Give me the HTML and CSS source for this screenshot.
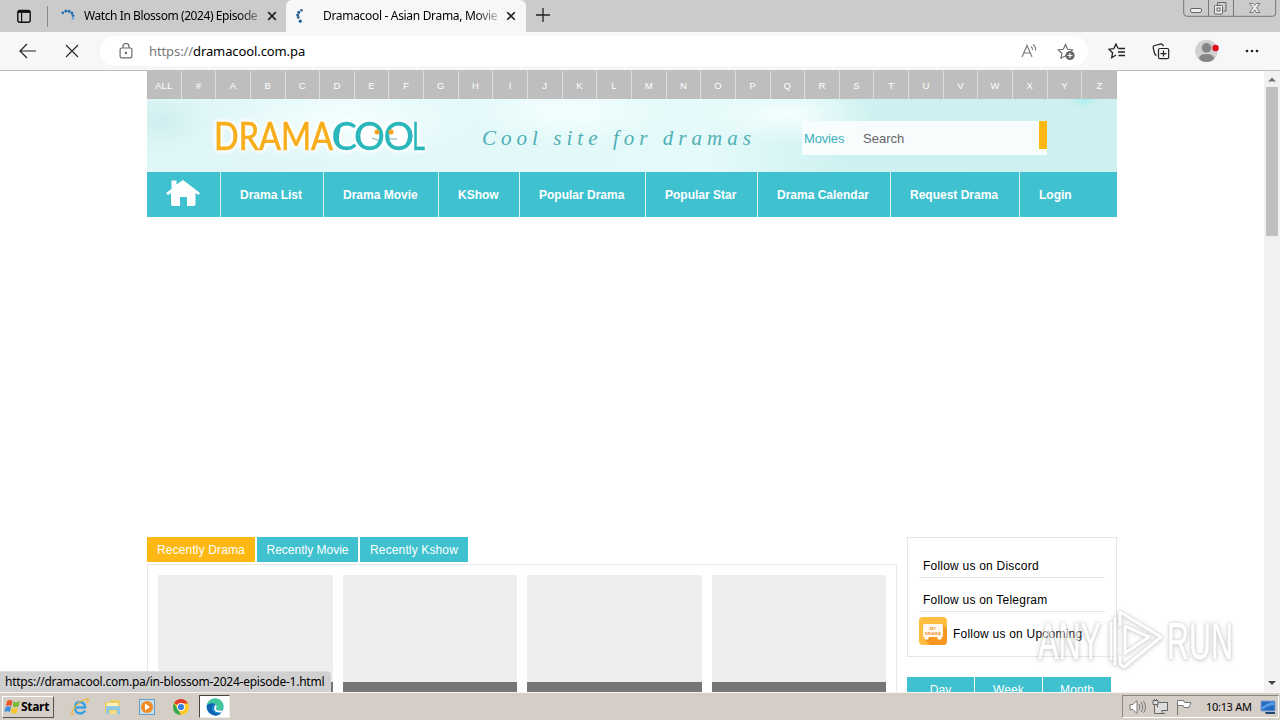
FILE: index.html
```
<!DOCTYPE html>
<html lang="en">
<head>
<meta charset="utf-8">
<title>Dramacool - Asian Drama, Movies</title>
<link rel="stylesheet" href="styles.css">
</head>
<body>
<div class="screen">
  <header class="tabstrip">
    <svg class="tab-actions" width="16" height="16" viewBox="0 0 16 16"><rect x="1.800" y="2.400" width="12.400" height="11.800" rx="2" fill="none" stroke="#111" stroke-width="1.400"/><path d="M2 3.700h12" stroke="#111" stroke-width="2.400"/><path d="M5.600 5v9" stroke="#111" stroke-width="1.200"/></svg>
    <span class="strip-divider"></span>
    <div class="tab tab-first">
      <svg width="16" height="16" viewBox="0 0 16 16"><g fill="#1f6caf"><circle cx="2.800" cy="4.800" r="1.400"/><circle cx="5.800" cy="3" r="1.500"/><circle cx="9" cy="3.200" r="1.500"/><circle cx="11.800" cy="5" r="1.500"/><circle cx="13" cy="7.600" r="1.300"/></g><circle cx="13" cy="10.400" r="1.400" fill="#64a9e0"/></svg>
      <span class="tab-title title-one">Watch In Blossom (2024) Episode</span>
      <svg class="tab-close" width="10" height="10" viewBox="0 0 10 10"><path d="M1.200 1.200l7.600 7.600M8.800 1.200L1.200 8.800" stroke="#222" stroke-width="1.700"/></svg>
    </div>
    <div class="tab tab-active">
      <svg width="16" height="16" viewBox="0 0 16 16"><g fill="#245f90"><circle cx="7.500" cy="2.300" r="1.300"/><circle cx="4.800" cy="4.200" r="1.500"/><circle cx="3.700" cy="7" r="1.500"/><circle cx="4.200" cy="9.400" r="1.300"/><circle cx="6.300" cy="13.200" r="1.600"/></g></svg>
      <span class="tab-title title-two">Dramacool - Asian Drama, Movie</span>
      <svg class="tab-close" width="10" height="10" viewBox="0 0 10 10"><path d="M1.200 1.200l7.600 7.600M8.800 1.200L1.200 8.800" stroke="#222" stroke-width="1.600"/></svg>
    </div>
    <svg class="new-tab" width="14" height="14" viewBox="0 0 14 14"><path d="M7 0v14M0 7h14" stroke="#222" stroke-width="1.300"/></svg>
    <div class="window-controls">
      <svg width="94" height="18" viewBox="0 0 94 18" fill="none"><path d="M.7 0v13q0 3.300 3 3.300h86q3 0 3-3.300V0M25.500 0v16M50.500 0v16" stroke="#777"/><rect x="7.500" y="8.500" width="11" height="4" rx="1.500" fill="#eee" stroke="#666"/><path d="M34.500 5V2.500h8.500v8.500h-2.500" stroke="#666"/><rect x="31.500" y="5.500" width="8" height="8.500" rx="1" fill="#eee" stroke="#666"/><rect x="34" y="8" width="3" height="3" stroke="#666"/><path d="M66.500 3.500h3.500l1.700 2 1.700-2H77l-3.500 4.200 3.500 4.800h-3.600l-1.700-2.600-1.700 2.600h-3.500l3.500-4.800z" fill="#eee" stroke="#777"/></svg>
    </div>
  </header>
  <div class="toolbar">
    <svg class="nav-back" width="18" height="16" viewBox="0 0 18 16" fill="none" stroke="#222" stroke-width="1.200"><path d="M17 8H1.500M8 1L1 8l7 7"/></svg>
    <svg class="nav-stop" width="14" height="14" viewBox="0 0 14 14"><path d="M1 1l12 12M13 1L1 13" stroke="#222" stroke-width="1.100"/></svg>
    <div class="address">
      <svg class="lock" width="14" height="16" viewBox="0 0 14 16" fill="none" stroke="#6b6b6b" stroke-width="1.200"><rect x="1.100" y="5" width="11.800" height="9.900" rx="1.600"/><path d="M4 5V3.500a3 3 0 0 1 6 0V5"/><circle cx="7" cy="10" r=".6" fill="#666"/></svg>
      <span class="url"><span class="url-scheme">https://</span>dramacool.com.pa</span>
      <svg class="read-aloud" width="18" height="16" viewBox="0 0 18 16" fill="none" stroke="#777" stroke-width="1.100"><path d="M1 14L6 2.500 11 14M2.800 10h6.500M10 3.500q1.700 1.400 1.500 3.500M12 1.500q3 2 2.600 6"/></svg>
      <svg class="star-add" width="18" height="18" viewBox="0 0 18 18"><path d="M8.500 1.500l2.100 4.700 5 .6-3.600 3.500.8 5-4.300-2.500L4 15.300l.9-5-3.700-3.500 5.100-.6z" fill="none" stroke="#666" stroke-width="1.100"/><circle cx="13" cy="12.500" r="4.600" fill="#666"/><path d="M10.500 12.500h5M13 10v5" stroke="#fff" stroke-width="1.200"/></svg>
    </div>
    <svg class="favorites" width="18" height="16" viewBox="0 0 18 16" fill="none" stroke="#222" stroke-width="1.300"><path d="M10 5.500L8 1 5.800 5.600 1 6.200l3.600 3.500-.9 5L8 12M10.500 5.500H17M10 9h7M10.500 12.500H17"/></svg>
    <svg class="collections" width="18" height="17" viewBox="0 0 18 17" fill="none" stroke="#222" stroke-width="1.200"><path d="M4.500 12.500Q3 12 2.500 10L1.200 5q-.4-2 1.500-2.500l6.500-1.700q1.500 0 2.300 2.500"/><rect x="6.500" y="5.500" width="10.200" height="10.200" rx="1.500"/><path d="M8.500 10.600H14.500M11.500 7.600v6"/></svg>
    <svg class="avatar" width="24" height="24" viewBox="0 0 24 24"><circle cx="11.500" cy="12" r="11.300" fill="#d0d0d0"/><circle cx="11.500" cy="8.800" r="4.800" fill="#858585"/><path d="M4 20q0-5 7.500-5t7.500 5q-3 3-7.500 3T4 20" fill="#858585"/><circle cx="20.500" cy="9" r="3.200" fill="#e00b1c"/></svg>
    <svg class="more" width="14" height="4" viewBox="0 0 14 4" fill="#222"><circle cx="2" cy="2" r="1.300"/><circle cx="7" cy="2" r="1.300"/><circle cx="12" cy="2" r="1.300"/></svg>
  </div>

  <main class="viewport">
    <div class="site">
      <nav class="letters"><a>ALL</a><a>#</a><a>A</a><a>B</a><a>C</a><a>D</a><a>E</a><a>F</a><a>G</a><a>H</a><a>I</a><a>J</a><a>K</a><a>L</a><a>M</a><a>N</a><a>O</a><a>P</a><a>Q</a><a>R</a><a>S</a><a>T</a><a>U</a><a>V</a><a>W</a><a>X</a><a>Y</a><a>Z</a></nav>
      <div class="banner">
        <svg class="logo" width="230" height="56" viewBox="0 0 230 56">
          <g fill="#fff"><circle cx="164" cy="27" r="12"/><circle cx="194" cy="27" r="12"/></g>
          <text class="logo-drama" x="9" y="41" textLength="119" lengthAdjust="spacingAndGlyphs">DRAMA</text>
          <g class="logo-cool">
            <text x="126.500 149.500 178.500" y="41">COO</text>
            <text x="207" y="41" textLength="13" lengthAdjust="spacingAndGlyphs">L</text>
          </g>
          <path d="M164 13.500a13.500 13.500 0 0 0 0 27Q155 36 155 27t9-13.500M194 13.500a13.500 13.500 0 0 1 0 27Q203 36 203 27t-9-13.500M137 14q-9 5-8 14t9 12q-5-6-4-13t3-13" fill="#29b7bb"/>
          <circle cx="172" cy="23" r="2.500" fill="#f5a21f"/><circle cx="186" cy="23" r="2.500" fill="#f5a21f"/>
          <path d="M167 29l7 2.500M184 30h8" stroke="#4e99a4" stroke-width=".8"/>
        </svg>
        <svg class="tagline" width="280" height="40" viewBox="0 0 280 40"><text x="1" y="27" textLength="269">Cool site for dramas</text></svg>
        <div class="search"><span class="search-type">Movies</span><span class="search-input">Search</span><span class="search-button"></span></div>
      </div>
      <nav class="mainnav">
        <a class="n-home"><svg width="36" height="30" viewBox="0 0 36 30"><path d="M7.500 11V2.500h5v4L19 2l17 13-1.500 2-3-2v11q0 2-2 2H23v-9h-7v9H9q-2 0-2-2V15l-3 2-2-2z" fill="#fff"/></svg></a>
        <a class="n-list">Drama List</a><a class="n-movie">Drama Movie</a><a class="n-kshow">KShow</a><a class="n-popular">Popular Drama</a><a class="n-star">Popular Star</a><a class="n-calendar">Drama Calendar</a><a class="n-request">Request Drama</a><a class="n-login">Login</a>
      </nav>
      <div class="content">
        <section class="recent">
          <div class="recent-tabs"><a class="recent-on">Recently Drama</a><a class="recent-movie">Recently Movie</a><a>Recently Kshow</a></div>
          <div class="cards"><div class="card"></div><div class="card"></div><div class="card"></div><div class="card"></div></div>
        </section>
        <aside class="side">
          <div class="follow">
            <a>Follow us on Discord</a><a>Follow us on Telegram</a>
            <a class="upcoming"><svg width="28" height="28" viewBox="0 0 28 28"><rect width="28" height="28" rx="4" fill="#ffbd42"/><path d="M5 22L22 6l6 6v12q0 4-4 4H11z" fill="#f69822"/><rect x="4" y="7" width="20" height="13" rx="1.500" fill="#fff8ee"/><path d="M6 20v2h3v-2M19 20v2h3v-2" stroke="#fff" fill="#fff"/><text x="14" y="12.500" text-anchor="middle" class="mini">MY</text><text x="14" y="17.500" text-anchor="middle" class="mini">DRAMA</text></svg><span>Follow us on Upcoming</span></a>
          </div>
          <div class="periods"><a>Day</a><a>Week</a><a>Month</a></div>
        </aside>
      </div>
    </div>
    <div class="scrollbar">
      <svg width="16" height="16" viewBox="0 0 16 16"><path d="M4 10.500l4-4 4 4z" fill="#777"/></svg>
      <span class="thumb"></span>
      <svg class="arrow-down" width="16" height="16" viewBox="0 0 16 16"><path d="M4 6l4 4 4-4z" fill="#444"/></svg>
    </div>
    <div class="status-bubble">https://dramacool.com.pa/in-blossom-2024-episode-1.html</div>
    <svg class="watermark" width="204" height="72" viewBox="0 0 204 72">
      <text class="mark" x="2" y="53" textLength="63" lengthAdjust="spacingAndGlyphs">ANY</text>
      <text class="mark" x="131" y="53" textLength="66" lengthAdjust="spacingAndGlyphs">RUN</text>
      <path d="M75 54V16M79 11v48M84 20V6l41 25-37 30-4-3V50M89 20v27l24-16z" fill="none" stroke="#fff" stroke-width="3" stroke-linejoin="round"/>
    </svg>
  </main>

  <footer class="taskbar">
    <div class="start"><svg width="17" height="16" viewBox="0 0 17 16"><path d="M3 2q3-2 5.500 0L7.300 7Q5 5.500 2 7z" fill="#e9572b"/><path d="M9.500 2.500Q12 4 16 2l-1.500 5.500q-3 1.500-6-.2z" fill="#7dbb37"/><path d="M1.600 8Q5 6.600 7 8l-1.200 5Q4 11.500.5 13z" fill="#3f8ed8"/><path d="M8 8.500q3 1.700 6 .2L12.700 14q-3 1.300-6-.5z" fill="#f8c630"/></svg><b>Start</b></div>
    <svg class="task-ie" width="18" height="18" viewBox="0 0 18 18" fill="none"><path d="M14 12.500Q12.500 15.500 9 15.500q-5-.5-5-6T9 4q5 .5 5 5.500H5" stroke="#37a0e3" stroke-width="2.300"/><path d="M3 16Q-1 18 2 12 7 3 15 1q4-.5 1 4" stroke="#edb92f" stroke-width="1.200"/></svg>
    <svg class="task-folder" width="18" height="18" viewBox="0 0 18 18"><path d="M1 4h5l1-2h8l1 3v10H1z" fill="#efcc65"/><path d="M3 5h11v3H3z" fill="#fff2b5"/><path d="M2 8h14v8h-3v-4H5v4H2z" fill="#90c9e4"/><path d="M6 13h6v3H6z" fill="#f8df87"/></svg>
    <svg class="task-media" width="18" height="18" viewBox="0 0 18 18"><rect x="1.500" y="1.500" width="15" height="15" fill="#c4dfef" stroke="#679fc4"/><circle cx="9" cy="9" r="6" fill="#f18b22"/><path d="M7 5.500l5 3.500-5 3.500z" fill="#fff"/></svg>
    <svg class="task-chrome" width="18" height="18" viewBox="0 0 18 18"><circle cx="9" cy="9" r="8" fill="#ffca28"/><path d="M9 9L2 5Q4.500 1 9 1t7 4.500H9z" fill="#e43d30"/><path d="M2 5l4.500 7.500L9 17Q1 16.500 1 9q0-2 1-4" fill="#33a852"/><circle cx="9" cy="9" r="4" fill="#fff"/><circle cx="9" cy="9" r="3.100" fill="#397de8"/></svg>
    <div class="task-active"><svg width="18" height="18" viewBox="0 0 18 18"><circle cx="9" cy="9" r="8.500" fill="#1685cf"/><path d="M1 7Q3 0 10 .5q7 1 7.500 7.500 0 4-4.500 4.500-3 0-3-2 1-1 .5-3Q7 3 1 7" fill="#42c99a"/><path d="M7 7q-3 4 1 7.500 3.500 2.500 7.500.3Q12 19 7 17 1 14 1 8q3-4 8-1.500" fill="#1161ae"/><path d="M9.500 6.500q2 1.500.5 4 0 2 3 2h4l-1.500 2Q8 15 8 10z" fill="#fff"/></svg></div>
    <div class="tray">
      <svg width="19" height="18" viewBox="0 0 19 18" fill="#fff" stroke="#777"><path d="M2 6.500h3l4-4v13l-4-4H2z"/><path d="M11 6q2 3 0 6M13 4q3.500 5 0 10M15.500 3q4 6 0 12" fill="none"/></svg>
      <svg width="20" height="18" viewBox="0 0 20 18" fill="#ddd" stroke="#666"><rect x="6.500" y="4.500" width="10" height="8"/><path d="M3.500 7v8.500H14M11 13v2.500M2 2.500h5v4H2zM3.500 1v2M5.500 1v2"/></svg>
      <svg width="20" height="18" viewBox="0 0 20 18" fill="#fff" stroke="#777"><path d="M2.500 17V2.500h6l1 2H16l-2 5H9l-1-2H3"/></svg>
      <span class="clock">10:13 AM</span>
      <svg width="16" height="16" viewBox="0 0 16 16"><path d="M1 2h14v10H1z" fill="#2468c4" stroke="#7ca4cf"/><path d="M2 8q6-5 12-5v3q-6 0-12 5" fill="#589ce4"/><path d="M5 13h10v2H6z" fill="#20466f"/></svg>
    </div>
  </footer>
</div>
</body>
</html>
```
FILE: styles.css
```
* { box-sizing: border-box; }
body { margin: 0; font-family: "Liberation Sans", Arial, sans-serif; font-size: 12px; color: #000; }
svg { display: block; flex: none; }
.screen { width: 1280px; height: 720px; display: grid; grid-template-rows: 32px 38px 622px 28px; overflow: hidden; background: #fff; }
.tabstrip { display: flex; background: #cbcbcb; font: 12px "Noto Sans", sans-serif; }
.tab-actions { margin: 8px 0 0 16px; }
.strip-divider { width: 1px; height: 21px; margin: 6px 0 0 15px; background: #888; }
.tab { display: flex; padding-top: 8px; height: 32px; }
.tab-first { width: 238px; padding-left: 12px; }
.tab-active { width: 240px; padding-left: 8px; background: #f7f7f7; border-radius: 6px 6px 0 0; }
.tab-title { height: 16px; line-height: 16px; white-space: nowrap; }
.title-one { margin-left: 8px; width: 175px; letter-spacing: -.42px; -webkit-mask-image: linear-gradient(90deg,#000 155px,transparent 185px); }
.title-two { margin-left: 13px; width: 175px; letter-spacing: -.32px; -webkit-mask-image: linear-gradient(90deg,#000 152px,transparent 182px); }
.tab-close { margin: 3px 0 0 8px; }
.new-tab { margin: 8px 0 0 10px; }
.window-controls { margin-left: auto; margin-right: 3px; }
.toolbar { display: flex; align-items: center; background: #f7f7f7; }
.nav-back { margin-left: 19px; }
.nav-stop { margin-left: 28px; }
.address { display: flex; align-items: center; width: 988px; height: 30px; margin-left: 21px; padding-left: 19px; background: #fff; border-radius: 15px; }
.url { margin-left: 16px; width: 200px; font: 13px "Noto Sans", sans-serif; letter-spacing: -.1px; white-space: nowrap; }
.url-scheme { color: #777; }
.read-aloud { margin-left: auto; }
.star-add { margin: 2px 13px 0 18px; }
.favorites { margin-left: 20px; }
.collections { margin-left: 26px; }
.avatar { margin-left: 25px; }
.more { margin-left: 26px; }
.viewport { position: relative; display: flex; border-top: 1px solid #bebebe; overflow: hidden; }
.site { width: 970px; margin-left: 147px; }
.letters { display: grid; grid-template-columns: repeat(28,1fr); grid-template-rows: 28px; height: 28px; background: #bebebe; color: #fff; font-size: 9.5px; letter-spacing: .3px; text-align: center; line-height: 30px; }
.letters a { border-right: 1px solid #ddd; }
.letters a:last-child { border: 0; }
.banner { display: flex; height: 73px; background: radial-gradient(45px 28px at 15px 22px,#cfeeef,transparent), radial-gradient(90px 30px at 640px 15px,#f5ffff,transparent), radial-gradient(110px 32px at 420px 12px,#f4ffff,transparent), radial-gradient(140px 45px at 200px 20px,#f4ffff,transparent), radial-gradient(16px 9px at 937px 0,#a9eeee,transparent), linear-gradient(90deg,#dff6f7 0,#e5fafa 58%,#cff1f1 72%,#cef0f0 100%); }
.logo { margin: 10px 0 0 58px; filter: drop-shadow(0 0 1.5px #fff) drop-shadow(0 0 1.5px #fff) drop-shadow(0 0 2px #fff); }
.logo-drama { font: 39px Lato, sans-serif; fill: #f7ae1c; stroke: #f7ae1c; stroke-width: .7px; }
.logo-cool { font: 38px Lato, sans-serif; fill: #29b7bb; stroke: #29b7bb; stroke-width: .3px; }
.tagline { margin: 19px 0 0 46px; }
.tagline text { font: italic 21px "Liberation Serif", serif; fill: #4eafb5; }
.search { display: flex; width: 245px; height: 34px; margin: 22px 0 0 41px; background: #f7fcfc; line-height: 35px; font-size: 13px; }
.search-type { padding-left: 2px; width: 61px; color: #3dafbd; letter-spacing: -.15px; }
.search-input { width: 176px; color: #666; }
.search-button { width: 8px; height: 28px; background: #fdb813; }
.mainnav { display: flex; height: 45px; background: #3fc1cf; color: #fff; font-weight: bold; line-height: 46px; }
.mainnav a { padding-left: 19px; border-right: 1px solid #d8f4f6; white-space: nowrap; }
.mainnav .n-home { width: 74px; padding-top: 6px; padding-left: 17px; }
.n-list { width: 103px; }
.n-movie { width: 115px; }
.n-kshow { width: 81px; }
.n-popular { width: 126px; }
.n-star { width: 112px; }
.n-calendar { width: 133px; }
.n-request { width: 129px; }
.mainnav .n-login { border: 0; }
.content { display: flex; margin-top: 320px; gap: 10px; }
.recent { width: 750px; }
.recent-tabs { display: flex; gap: 2px; height: 27px; color: #fff; letter-spacing: .13px; }
.recent-tabs a { width: 108px; height: 25px; line-height: 26px; text-align: center; background: #3fc1cf; }
.recent-tabs .recent-on { background: #fdb813; }
.recent-tabs .recent-movie { width: 101px; letter-spacing: 0; }
.cards { display: grid; grid-template-columns: repeat(4,1fr); gap: 10px; height: 220px; padding: 10px; border: 1px solid #e9e7e8; }
.card { background: linear-gradient(#eee 107px,#767676 107px); }
.side { width: 210px; }
.follow { height: 120px; padding: 11px 11px 0; border: 1px solid #e5e5e5; }
.follow a { display: block; height: 34px; padding: 15px 0 0 4px; letter-spacing: .22px; border-bottom: 1px solid #e5e5e5; }
.follow a:first-child { height: 29px; padding-top: 10px; }
.follow .upcoming { display: flex; align-items: flex-start; gap: 6px; height: 34px; padding: 5px 0 0; border: 0; }
.upcoming span { padding-top: 10px; white-space: nowrap; }
.mini { font: bold 4px "Liberation Sans", sans-serif; fill: #ef8e24; }
.periods { display: grid; grid-template-columns: 67px 67px 68px; gap: 1px; height: 30px; margin-top: 20px; color: #fff; text-align: center; line-height: 26px; letter-spacing: .1px; }
.periods a { background: #3fc1cf; }
.scrollbar { display: flex; flex-direction: column; width: 16px; margin-left: auto; background: #f1f1f1; }
.thumb { width: 12px; height: 149px; margin-left: 2px; background: #bfbfbf; }
.arrow-down { margin-top: auto; margin-bottom: 1px; }
.status-bubble { position: absolute; left: 0; bottom: 0; width: 331px; height: 21px; padding-left: 5px; background: #d0d0d0; border-top: 1px solid #ddd; border-radius: 0 4px 0 0; font: 12px/20px "Noto Sans", sans-serif; letter-spacing: -.24px; white-space: nowrap; }
.watermark { position: absolute; left: 1036px; top: 535px; opacity: .6; filter: drop-shadow(0 0 1px #aaa) drop-shadow(0 1px 2px #bbb); }
.mark { font: 51px "Liberation Sans", sans-serif; fill: #fff; stroke: #fff; stroke-width: .5px; }
.taskbar { display: flex; align-items: center; background: #d5cec7; border-top: 1px solid #f7f5f1; font-family: "Noto Sans", sans-serif; }
.start { display: flex; align-items: center; width: 52px; height: 22px; margin-left: 2px; padding-left: 1px; border: 1px solid; border-color: #fff #555 #555 #fff; font-size: 12px; letter-spacing: -.3px; }
.task-ie { margin-left: 17px; }
.task-folder { margin-left: 15px; }
.task-media { margin-left: 16px; }
.task-chrome { margin-left: 16px; }
.task-active { display: grid; place-items: center; width: 31px; height: 23px; margin-left: 9px; background: #fff; border: 1px solid; border-color: #444 #eee #eee #444; }
.tray { display: flex; align-items: center; width: 157px; height: 23px; margin-left: auto; margin-right: 1px; padding-left: 5px; border: 1px solid; border-color: #888 #fff #fff #888; gap: 4px; }
.clock { width: 50px; margin-left: 7px; font-size: 11px; letter-spacing: -.3px; white-space: nowrap; }
```
